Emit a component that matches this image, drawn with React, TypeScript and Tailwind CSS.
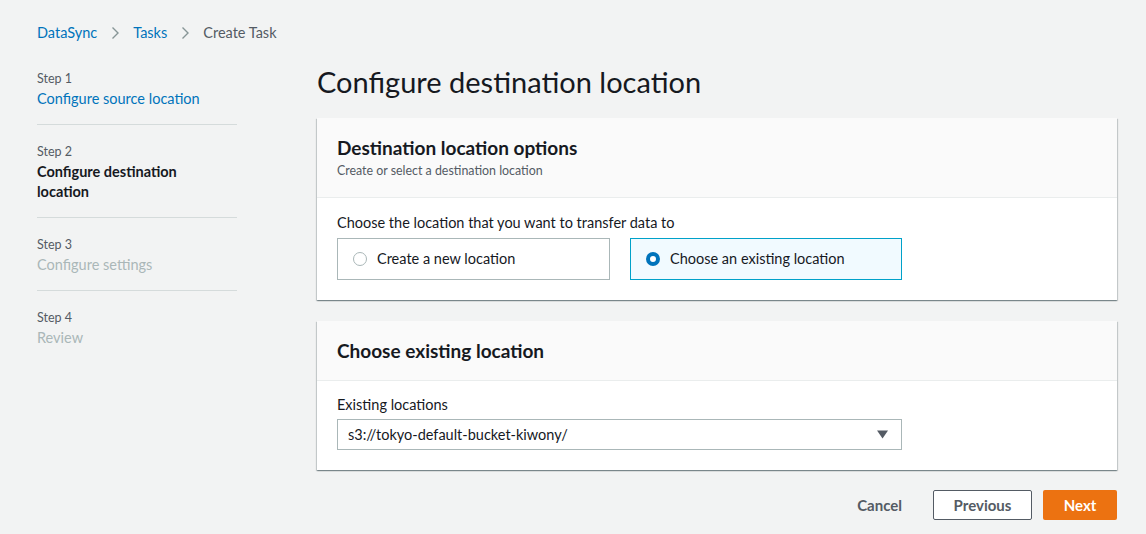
import { useState } from "react"

const font = { fontFamily: 'Lato, "Open Sans", Arial, sans-serif' }

const steps = [
  { label: "Step 1", title: "Configure source location", state: "done" },
  { label: "Step 2", title: "Configure destination location", state: "active" },
  { label: "Step 3", title: "Configure settings", state: "todo" },
  { label: "Step 4", title: "Review", state: "todo" }
]

const cardShadow =
  "shadow-[0_1px_1px_0_rgba(0,28,36,0.3),1px_1px_1px_0_rgba(0,28,36,0.15),-1px_1px_1px_0_rgba(0,28,36,0.15)]"

const Chevron = () => (
  <svg width="16" height="16" viewBox="0 0 16 16" className="mx-[10px]">
    <path d="M5.5 2.5 11 8l-5.5 5.5" fill="none" stroke="#879596" strokeWidth="1.4" />
  </svg>
)

const Radio = ({ checked }: { checked: boolean }) =>
  checked ? (
    <span className="block h-[14px] w-[14px] rounded-full border-[4px] border-[#0073bb] bg-white" />
  ) : (
    <span className="block h-[14px] w-[14px] rounded-full border border-[#aab7b8] bg-white" />
  )

export default function App() {
  const [choice, setChoice] = useState<"new" | "existing">("existing")

  return (
    <div style={font} className="min-h-[534px] w-full bg-[#f2f3f3] text-[#16191f]">
      <nav className="flex items-center px-[37px] pt-[23px] text-[14.5px] leading-[20px]">
        <span className="text-[#0073bb]">DataSync</span>
        <Chevron />
        <span className="text-[#0073bb]">Tasks</span>
        <Chevron />
        <span className="text-[#545b64]">Create Task</span>
      </nav>

      <div className="flex pt-[28px]">
        <aside className="ml-[37px] w-[200px] shrink-0">
          {steps.map((s, i) => (
            <div
              key={s.label}
              className={`${i < steps.length - 1 ? "border-b border-[#d5dbdb] pb-[15px]" : ""} ${i === 0 ? "pt-0" : "pt-[19px]"}`}>
              <div className="text-[12.5px] leading-[16px] text-[#545b64]">{s.label}</div>
              <div
                className={`mt-[2px] text-[14.5px] leading-[20px] ${
                  s.state === "done"
                    ? "text-[#0073bb]"
                    : s.state === "active"
                      ? "pr-[40px] font-bold text-[#16191f]"
                      : "text-[#aab7b8]"
                }`}>
                {s.title}
              </div>
            </div>
          ))}
        </aside>

        <main className="ml-[80px] w-[800px] shrink-0">
          <h1 className="mt-[-7px] text-[29px] leading-[36px] font-normal text-[#16191f]">
            Configure destination location
          </h1>

          <section className={`mt-[18px] bg-white ${cardShadow}`}>
            <header className="border-b border-[#eaeded] bg-[#fafafa] px-[20px] pt-[18px] pb-[18px]">
              <h2 className="text-[19px] leading-[23px] font-bold">Destination location options</h2>
              <p className="mt-[4px] text-[12.4px] leading-[16px] text-[#545b64]">
                Create or select a destination location
              </p>
            </header>
            <div className="px-[20px] pt-[15px] pb-[20px]">
              <div className="text-[14.5px] leading-[20px]">Choose the location that you want to transfer data to</div>
              <div className="mt-[5px] grid grid-cols-[273px_272px] gap-[20px]">
                <button
                  onClick={() => setChoice("new")}
                  className={`flex h-[42px] items-center gap-[10px] border px-[15px] text-left text-[14.5px] ${
                    choice === "new" ? "border-[#00a1c9] bg-[#f1faff]" : "border-[#aab7b8] bg-white"
                  }`}>
                  <Radio checked={choice === "new"} />
                  Create a new location
                </button>
                <button
                  onClick={() => setChoice("existing")}
                  className={`flex h-[42px] items-center gap-[10px] border px-[15px] text-left text-[14.5px] ${
                    choice === "existing" ? "border-[#00a1c9] bg-[#f1faff]" : "border-[#aab7b8] bg-white"
                  }`}>
                  <Radio checked={choice === "existing"} />
                  Choose an existing location
                </button>
              </div>
            </div>
          </section>

          <section className={`mt-[21px] bg-white ${cardShadow}`}>
            <header className="border-b border-[#eaeded] bg-[#fafafa] px-[20px] pt-[18px] pb-[18px]">
              <h2 className="text-[19px] leading-[23px] font-bold">Choose existing location</h2>
            </header>
            <div className="px-[20px] pt-[14px] pb-[20px]">
              <div className="text-[14.5px] leading-[20px]">Existing locations</div>
              <div className="mt-[4px] flex h-[31px] w-[565px] items-center justify-between border border-[#aab7b8] bg-white pr-[13px] pl-[10px] text-[14.5px]">
                <span>s3://tokyo-default-bucket-kiwony/</span>
                <svg width="11" height="9" viewBox="0 0 11 9">
                  <path d="M0 0.5h11L5.5 8.5z" fill="#545b64" />
                </svg>
              </div>
            </div>
          </section>

          <div className="mt-[20px] flex items-center justify-end">
            <button className="mr-[13px] px-[18px] text-[15px] leading-[28px] font-bold text-[#545b64]">Cancel</button>
            <button className="mr-[11px] h-[30px] w-[99px] rounded-[2px] border border-[#545b64] bg-white text-[15px] font-bold text-[#545b64]">
              Previous
            </button>
            <button className="h-[30px] w-[74px] rounded-[2px] bg-[#ec7211] text-[15px] font-bold text-white">
              Next
            </button>
          </div>
        </main>
      </div>
    </div>
  )
}
